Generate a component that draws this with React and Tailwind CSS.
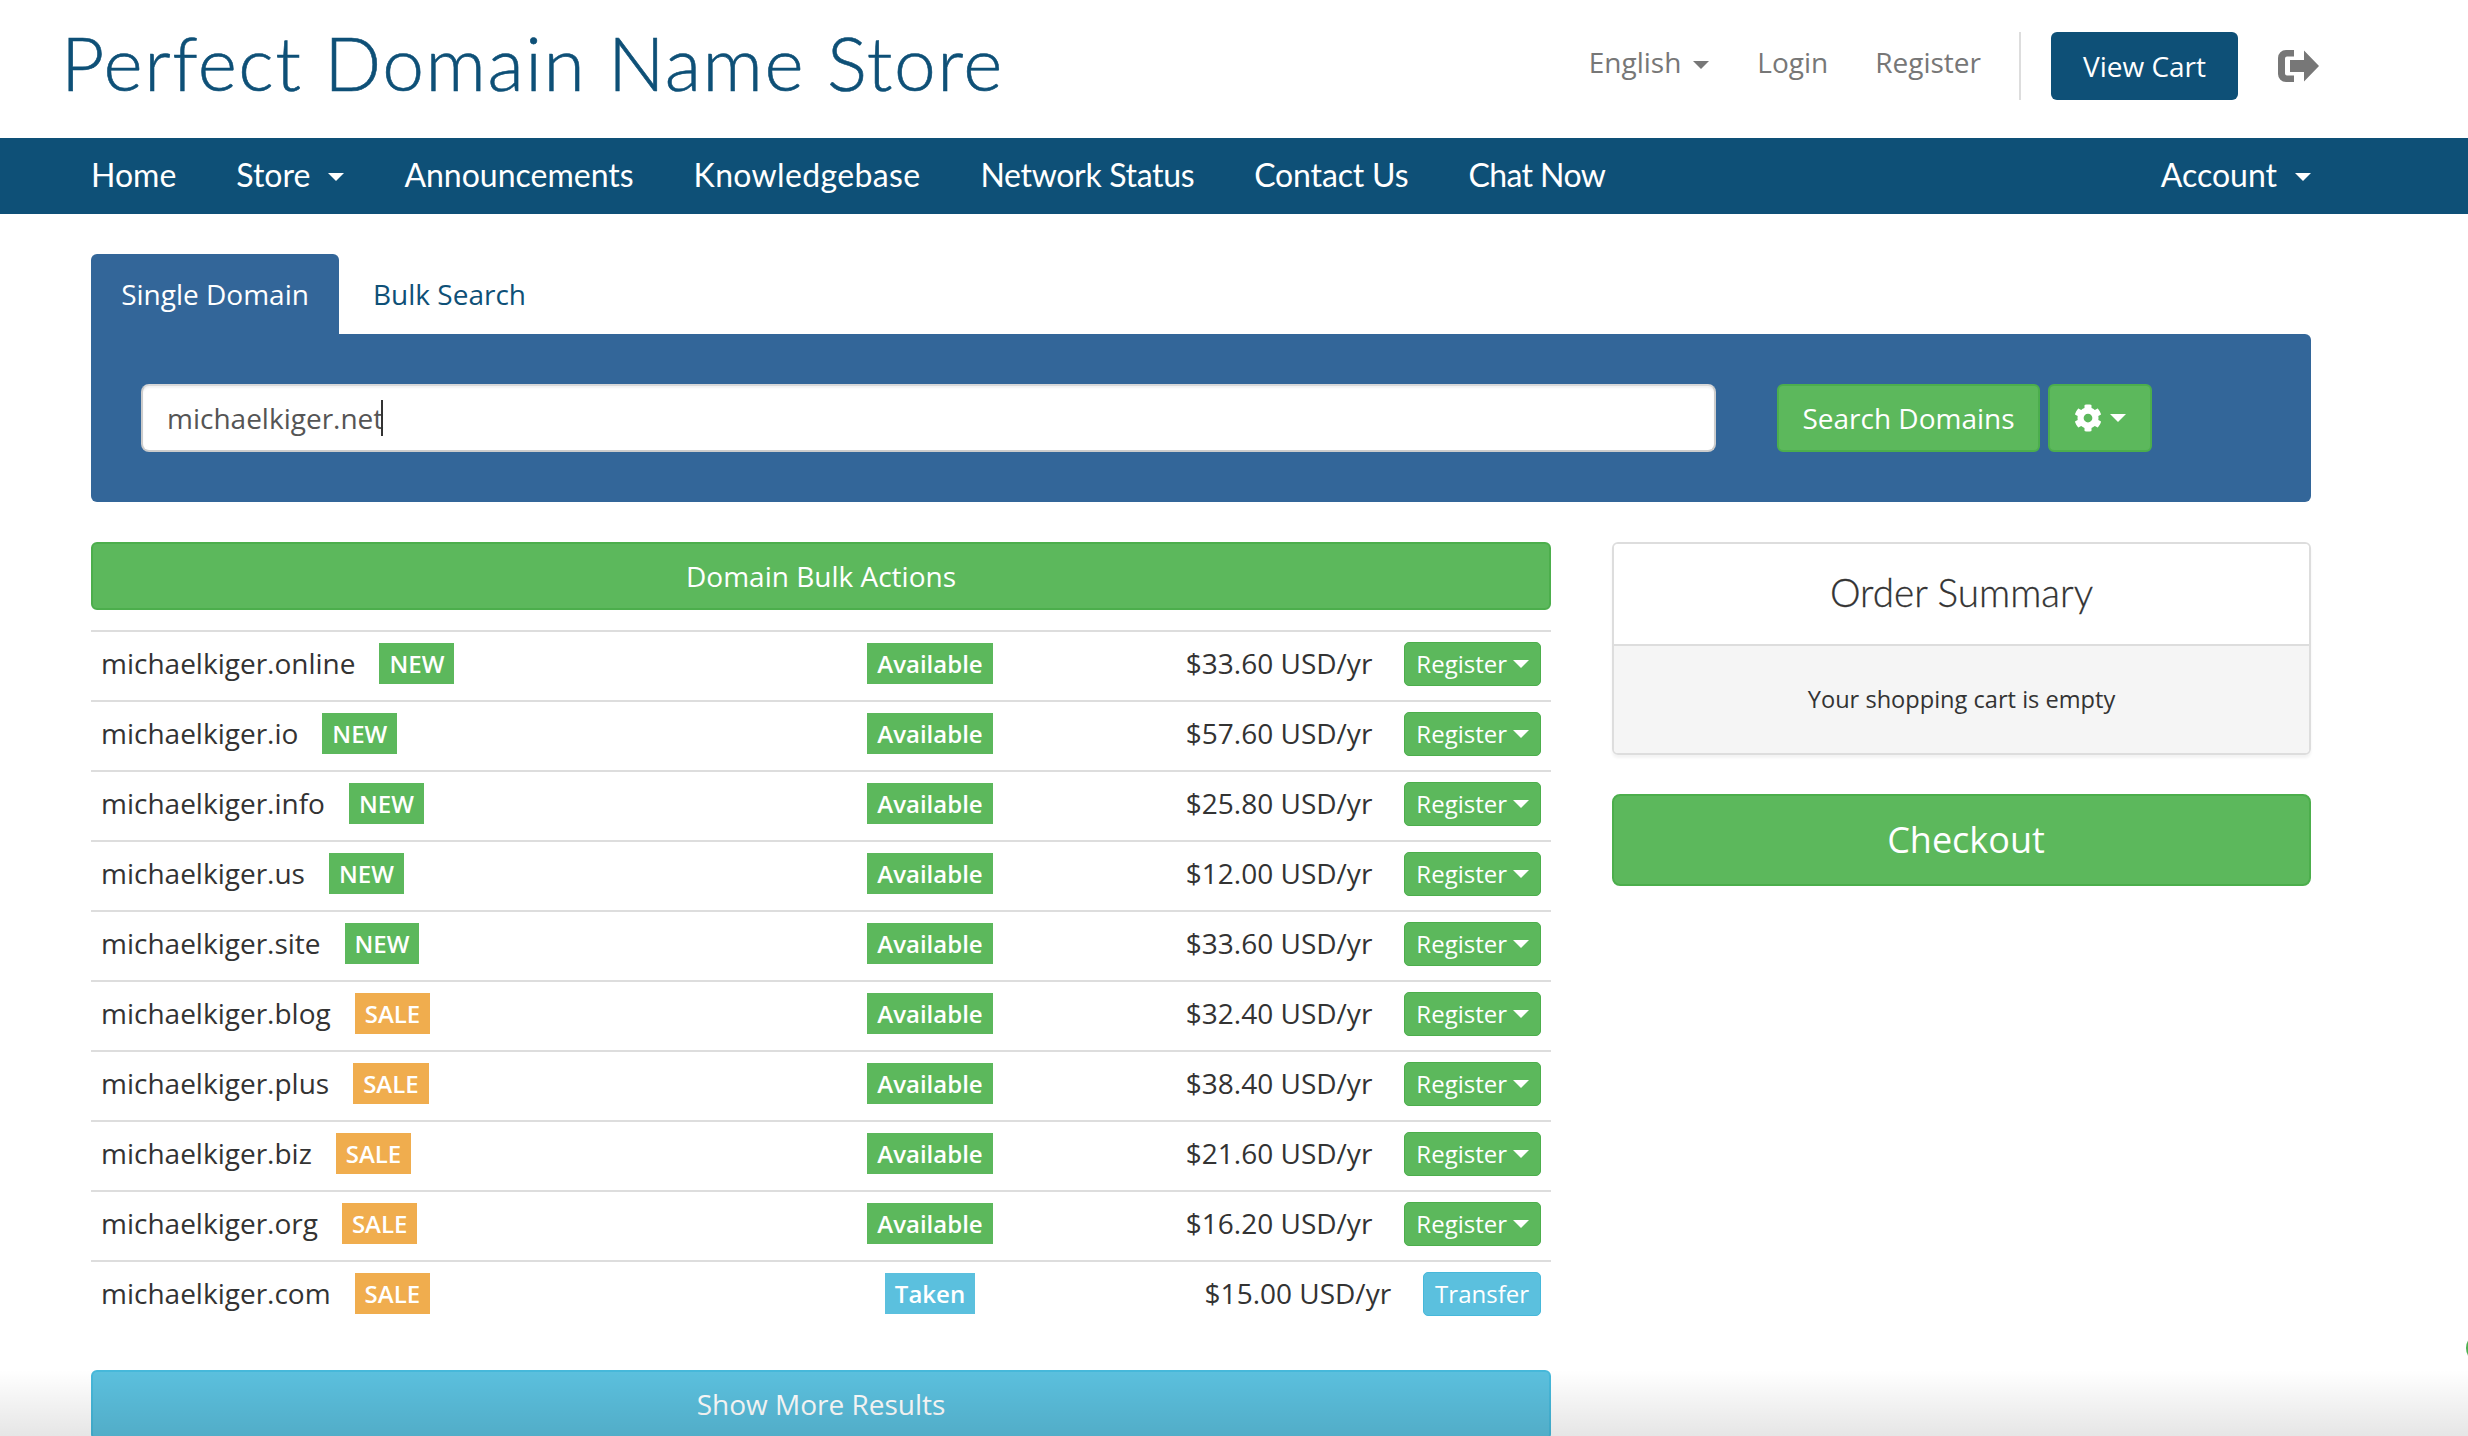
import { FaCog } from "react-icons/fa";

const navLinks = [
  { label: "Announcements", className: "" },
  { label: "Knowledgebase", className: "tracking-[0.35px]" },
  { label: "Network Status", className: "tracking-[-0.33px]" },
  { label: "Contact Us", className: "tracking-[-0.15px]" },
  { label: "Chat Now", className: "tracking-[-0.6px]" },
];

const results = [
  { name: "michaelkiger.online", tag: "NEW", price: "$33.60" },
  { name: "michaelkiger.io", tag: "NEW", price: "$57.60" },
  { name: "michaelkiger.info", tag: "NEW", price: "$25.80" },
  { name: "michaelkiger.us", tag: "NEW", price: "$12.00" },
  { name: "michaelkiger.site", tag: "NEW", price: "$33.60" },
  { name: "michaelkiger.blog", tag: "SALE", price: "$32.40" },
  { name: "michaelkiger.plus", tag: "SALE", price: "$38.40" },
  { name: "michaelkiger.biz", tag: "SALE", price: "$21.60" },
  { name: "michaelkiger.org", tag: "SALE", price: "$16.20" },
  { name: "michaelkiger.com", tag: "SALE", price: "$15.00", taken: true },
];

const Caret = ({ className }) => (
  <span className={`inline-block h-0 w-0 border-x-[8px] border-t-[8px] border-x-transparent ${className}`} />
);

const LogoutIcon = () => (
  <svg viewBox="0 0 41 32" className="h-8 w-[41px] fill-[#777]">
    <path d="M16 0H8a8 8 0 0 0-8 8v16a8 8 0 0 0 8 8h8v-6.500H9a2 2 0 0 1-2-2V8.500a2 2 0 0 1 2-2h7z" />
    <path d="M12 10h14V.5L41 16 26 31.500V22H12z" />
  </svg>
);

const ResultRow = ({ row }) => (
  <div className="grid h-[70px] grid-cols-[700px_278px_1fr] items-center border-t-2 border-[#ddd] pb-[5px]">
    <div className="flex items-center pl-[10px] text-[28px] text-[#333]">
      <span className="-mt-[2px]">{row.name}</span>
      <span
        className={`ml-6 flex h-[41px] items-center px-[10px] text-[24px] font-semibold text-white ${
          row.tag === "NEW" ? "bg-[#5cb85c]" : "bg-[#f0ad4e]"
        }`}
      >
        {row.tag}
      </span>
    </div>
    <div className="flex justify-center">
      <span
        className={`flex h-[41px] items-center px-[10px] text-[24px] font-semibold text-white ${
          row.taken ? "bg-[#5bc0de]" : "bg-[#5cb85c]"
        }`}
      >
        {row.taken ? "Taken" : "Available"}
      </span>
    </div>
    <div className="flex items-center justify-end gap-8 pr-[10px]">
      <span className="-mt-[2px] text-[28px] text-[#333]">{row.price} USD/yr</span>
      {row.taken ? (
        <span className="flex h-[44px] items-center rounded-[5px] border border-[#46b8da] bg-[#5bc0de] px-[11px] text-[24px] text-white">
          Transfer
        </span>
      ) : (
        <span className="flex h-[44px] items-center gap-[6px] rounded-[5px] border border-[#4cae4c] bg-[#5cb85c] px-[11px] text-[24px] text-white">
          Register
          <Caret className="border-t-white" />
        </span>
      )}
    </div>
  </div>
);

export default function App() {
  return (
    <div className="relative h-[1436px] overflow-hidden bg-white font-['Open_Sans',sans-serif]">
      {/* Header */}
      <header className="flex h-[138px] items-start justify-between pl-[61px] pr-[149px] pt-[32px]">
        <h1 className="-mt-[15px] font-['Lato',sans-serif] text-[75px] font-light leading-[90px] tracking-[1.5px] text-[#0e5077] [-webkit-text-stroke:0.6px_#0e5077]">
          Perfect Domain Name Store
        </h1>
        <div className="flex items-center text-[28px] text-[#777]">
          <span className="-mt-[8px] flex items-center gap-3">
            English
            <Caret className="mt-[6px] border-t-[#777]" />
          </span>
          <span className="-mt-[8px] ml-[48px]">Login</span>
          <span className="-mt-[8px] ml-[47px]">Register</span>
          <span className="ml-[38px] h-[68px] w-[2px] bg-[#ddd]" />
          <span className="ml-[30px] flex h-[68px] w-[187px] items-center justify-center rounded-[6px] bg-[#0e5077] text-white">
            View Cart
          </span>
          <span className="ml-10 flex">
            <LogoutIcon />
          </span>
        </div>
      </header>

      {/* Nav */}
      <nav className="flex h-[76px] items-center justify-between bg-[#0e5077] pb-[2px] pl-[91px] pr-[157px] font-['Lato',sans-serif] text-[32px] font-normal text-white">
        <div className="flex items-center gap-[60px]">
          <span>Home</span>
          <span className="flex items-center gap-[18px]">
            Store
            <Caret className="mt-[4px] border-t-white" />
          </span>
          {navLinks.map((link) => (
            <span key={link.label} className={link.className}>
              {link.label}
            </span>
          ))}
        </div>
        <span className="flex items-center gap-[18px]">
          Account
          <Caret className="mt-[4px] border-t-white" />
        </span>
      </nav>

      <main className="w-[2311px] pl-[91px] pt-10">
        {/* Search tabs */}
        <div className="flex h-20 items-center text-[28px]">
          <span className="flex h-full w-[248px] items-center justify-center rounded-t-[6px] bg-[#336699] text-white">
            Single Domain
          </span>
          <span className="ml-[34px] text-[#0e5077]">Bulk Search</span>
        </div>
        <div className="flex h-[168px] items-center rounded-b-[6px] rounded-tr-[6px] bg-[#336699] px-[50px]">
          <div className="flex h-[68px] w-[1575px] items-center rounded-[8px] border-2 border-[#ccc] border-t-[#d9d9d9] bg-white pl-[24px] text-[28px] text-[#555] shadow-[inset_0_2px_2px_rgba(0,0,0,0.05)]">
            michaelkiger.net
            <span className="ml-[-2px] h-9 w-[2px] bg-[#333]" />
          </div>
          <span className="ml-[61px] flex h-[68px] w-[263px] items-center justify-center rounded-[6px] border-2 border-[#4cae4c] bg-[#5cb85c] text-[28px] text-white">
            Search Domains
          </span>
          <span className="ml-[8px] flex h-[68px] w-[104px] items-center justify-center gap-[8px] rounded-[6px] border-2 border-[#4cae4c] bg-[#5cb85c] text-white">
            <FaCog className="h-[28px] w-[28px]" />
            <Caret className="border-t-white" />
          </span>
        </div>

        <div className="mt-10 flex gap-[61px]">
          {/* Results */}
          <section className="w-[1460px]">
            <div className="flex h-[68px] items-center justify-center rounded-[6px] border-2 border-[#4cae4c] bg-[#5cb85c] text-[28px] text-white">
              Domain Bulk Actions
            </div>
            <div className="mt-5">
              {results.map((row) => (
                <ResultRow key={row.name} row={row} />
              ))}
            </div>
            <div className="mt-[40px] flex h-[70px] items-center justify-center rounded-[6px] border-2 border-[#46b8da] bg-[#5bc0de] pb-[2px] text-[28px] text-white">
              Show More Results
            </div>
          </section>

          {/* Order summary */}
          <aside className="w-[699px]">
            <div className="overflow-hidden rounded-[6px] border-2 border-[#ddd] shadow-[0_3px_3px_rgba(0,0,0,0.05)]">
              <div className="flex h-[102px] items-center justify-center border-b-2 border-[#ddd] bg-white pb-[3px] font-['Lato',sans-serif] text-[38.7px] font-light text-[#333] [-webkit-text-stroke:0.3px_#333]">
                Order Summary
              </div>
              <div className="flex h-[107px] items-center justify-center bg-[#f5f5f5] text-[23.6px] text-[#333]">
                Your shopping cart is empty
              </div>
            </div>
            <div className="mt-[39px] flex h-[92px] items-center justify-center rounded-[8px] border-2 border-[#4cae4c] bg-[#5cb85c] pl-[9px] text-[36px] text-white">
              Checkout
            </div>
          </aside>
        </div>
      </main>

      {/* Page fade over the bottom edge */}
      <div className="pointer-events-none absolute inset-x-0 bottom-0 h-[66px] bg-gradient-to-b from-transparent to-black/10" />
      {/* Chat widget peeking in at the right edge */}
      <div className="absolute right-[-28px] top-[1333px] h-[30px] w-[30px] rounded-full bg-[#4cb050]" />
    </div>
  );
}
